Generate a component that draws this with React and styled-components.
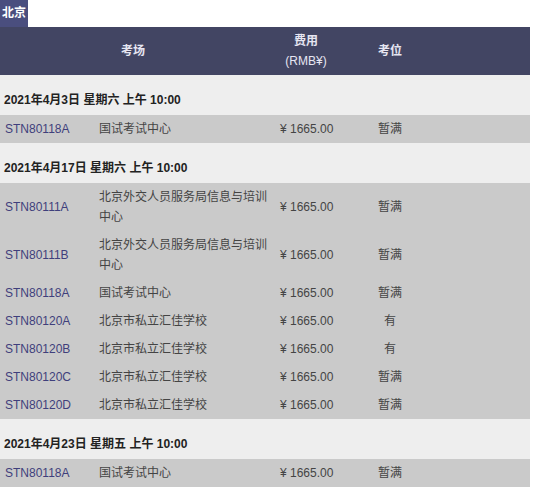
import React from "react";
import styled, { createGlobalStyle } from "styled-components";

const Global = createGlobalStyle`
  body {
    margin: 0;
    background: #ffffff;
    font-family: "Liberation Sans", "Noto Sans CJK SC", sans-serif;
    font-size: 12px;
  }
`;

const Page = styled.div`
  width: 530px;
`;

const Badge = styled.div`
  display: inline-block;
  background: #4a4e7e;
  color: #ffffff;
  font-weight: bold;
  font-size: 12px;
  line-height: 27px;
  padding: 0 2px;
  height: 27px;
`;

const cols = "94px 181px 62px 106px 1fr";

const HeaderRow = styled.div`
  display: grid;
  grid-template-columns: ${cols};
  background: #424563;
  color: #e6e6f2;
  padding: 4px 0;
  align-items: center;
  line-height: 20px;
`;

const HeadCell = styled.div`
  text-align: center;
  font-weight: ${(p) => (p.$bold ? "bold" : "normal")};
  grid-column: ${(p) => p.$span || "auto"};
  padding-right: ${(p) => p.$shift || 0}px;
  white-space: nowrap;
`;

const Sub = styled.div`
  font-weight: normal;
`;

const DateRow = styled.div`
  background: #eeeeee;
  color: #222222;
  font-weight: bold;
  line-height: 20px;
  padding: 15px 4px 5px;
`;

const Row = styled.div`
  display: grid;
  grid-template-columns: ${cols};
  background: #cacaca;
  line-height: 20px;
  padding: 4px 0;
  align-items: center;
`;

const Cell = styled.div`
  padding: 0 5px;
  color: ${(p) => p.$color || "#444444"};
  text-align: ${(p) => (p.$center ? "center" : "left")};
  white-space: ${(p) => (p.$nowrap ? "nowrap" : "normal")};
`;

const groups = [
  {
    date: "2021年4月3日 星期六 上午 10:00",
    rows: [["STN80118A", "国试考试中心", "暂满"]],
  },
  {
    date: "2021年4月17日 星期六 上午 10:00",
    rows: [
      ["STN80111A", "北京外交人员服务局信息与培训中心", "暂满"],
      ["STN80111B", "北京外交人员服务局信息与培训中心", "暂满"],
      ["STN80118A", "国试考试中心", "暂满"],
      ["STN80120A", "北京市私立汇佳学校", "有"],
      ["STN80120B", "北京市私立汇佳学校", "有"],
      ["STN80120C", "北京市私立汇佳学校", "暂满"],
      ["STN80120D", "北京市私立汇佳学校", "暂满"],
    ],
  },
  {
    date: "2021年4月23日 星期五 上午 10:00",
    rows: [["STN80118A", "国试考试中心", "暂满"]],
  },
];

export default function App() {
  return (
    <Page>
      <Global />
      <Badge>北京</Badge>
      <HeaderRow>
        <HeadCell $span="1 / span 2" $bold $shift={9}>考场</HeadCell>
        <HeadCell $bold>
          费用
          <Sub>(RMB¥)</Sub>
        </HeadCell>
        <HeadCell $bold>考位</HeadCell>
        <HeadCell />
      </HeaderRow>
      {groups.map((g) => (
        <React.Fragment key={g.date}>
          <DateRow>{g.date}</DateRow>
          {g.rows.map((r, i) => (
            <Row key={i}>
              <Cell $color="#3f3f7c" $nowrap>{r[0]}</Cell>
              <Cell>{r[1]}</Cell>
              <Cell $nowrap>¥ 1665.00</Cell>
              <Cell $center $nowrap>{r[2]}</Cell>
              <Cell />
            </Row>
          ))}
        </React.Fragment>
      ))}
    </Page>
  );
}
